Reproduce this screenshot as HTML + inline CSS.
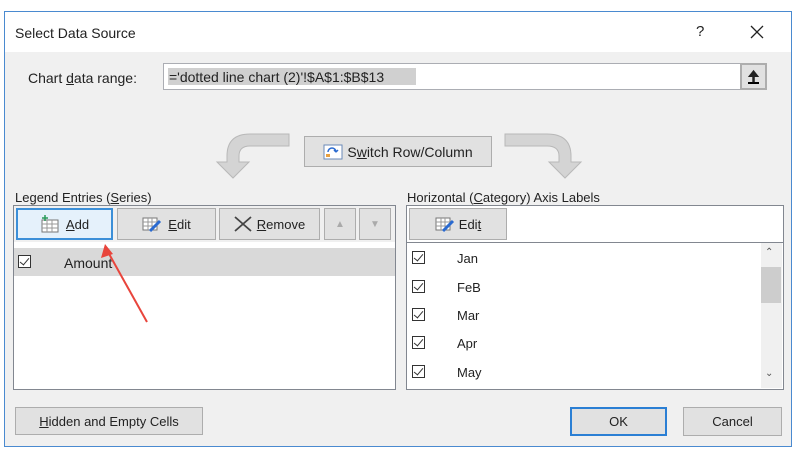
<!DOCTYPE html>
<html><head><style>
*{box-sizing:border-box;margin:0;padding:0}
body{width:799px;height:467px;background:#fff;position:relative;font-family:"Liberation Sans",sans-serif;font-size:13px;color:#222;overflow:hidden}
.a{position:absolute}
.dlg{left:4px;top:11px;width:788px;height:436px;border:1px solid #4a8ad0;background:#f0f0f0}
.btn{position:absolute;background:#e1e1e1;border:1px solid #adadad;display:flex;align-items:center;justify-content:center;font-size:13px;color:#222}
u{text-decoration:underline}
.cb{position:absolute;width:13px;height:13px;border:1px solid #333;background:#fff}
.cb:after{content:"";position:absolute;left:3px;top:0px;width:4px;height:8px;border:solid #333;border-width:0 1.5px 1.5px 0;transform:rotate(40deg)}
</style></head><body>
<div class="a dlg"></div>
<div class="a" style="left:5px;top:12px;width:786px;height:40px;background:#fff"></div>
<div class="a" style="left:15px;top:25px;font-size:14px">Select Data Source</div>
<div class="a" style="left:696px;top:23px;font-size:15px">?</div>
<svg class="a" style="left:750px;top:25px" width="14" height="14"><path d="M1 1L13 13M13 1L1 13" stroke="#222" stroke-width="1.3"/></svg>
<div class="a" style="left:28px;top:70px;font-size:14px">Chart <u>d</u>ata range:</div>
<div class="a" style="left:163px;top:63px;width:578px;height:27px;background:#fff;border:1px solid #abadb3"></div>
<div class="a" style="left:168px;top:68px;height:17px;width:248px;background:#d0d0d0"></div>
<div class="a" style="left:169px;top:69px;font-size:14px">='dotted line chart (2)'!$A$1:$B$13</div>
<div class="a" style="left:740px;top:63px;width:27px;height:27px;background:#e1e1e1;border:2px solid #adadad;text-align:center;font-weight:bold;font-size:14px;line-height:22px"><span style="border-bottom:2px solid #000;line-height:12px;display:inline-block">&#129033;</span></div>
<svg class="a" style="left:205px;top:130px" width="400" height="52">
<path d="M84 4H45Q22 4 22 26V32H12L28 48L44 32H34V26Q34 16 45 16H84Z" fill="#d4d4d4" stroke="#b8b8b8"/>
<path d="M300 4H342Q366 4 366 26V32H376L360 48L344 32H354V26Q354 16 342 16H300Z" fill="#d4d4d4" stroke="#b8b8b8"/>
</svg>
<div class="btn" style="left:304px;top:136px;width:188px;height:31px;font-size:14px"><svg width="20" height="16" style="margin-right:4px"><rect x="1" y="1" width="18" height="14" fill="#fff" stroke="#6b8ab8"/><path d="M5 8a4 4 0 0 1 8 0M13 8l2-2M13 8l-2-2" stroke="#2a6ad0" fill="none" stroke-width="1.5"/><rect x="3" y="10" width="4" height="3" fill="#e8a040"/></svg>S<u>w</u>itch Row/Column</div>
<div class="a" style="left:15px;top:190px;font-size:13px">Legend Entries (<u>S</u>eries)</div>
<div class="a" style="left:407px;top:190px;font-size:13px">Horizontal (<u>C</u>ategory) Axis Labels</div>
<div class="a" style="left:13px;top:205px;width:383px;height:185px;background:#fff;border:1px solid #828790"></div>
<div class="a" style="left:14px;top:206px;width:381px;height:36px;background:#f0f0f0"></div>
<div class="btn" style="left:16px;top:208px;width:97px;height:32px;background:#e5f1fb;border:2px solid #3c8fd8"><svg width="20" height="18" style="margin-right:6px"><rect x="2" y="5" width="16" height="12" fill="#fff" stroke="#777"/><path d="M2 9H18M2 13H18M7 5V17M12 5V17" stroke="#999"/><path d="M5 0V6M2 3H8" stroke="#2a9a5a" stroke-width="1.5"/></svg><u>A</u>dd</div>
<div class="btn" style="left:117px;top:208px;width:99px;height:32px"><svg width="20" height="18" style="margin-right:6px"><rect x="1" y="3" width="14" height="12" fill="#fff" stroke="#777"/><path d="M1 7H15M1 11H15M6 3V15M10 3V15" stroke="#999"/><path d="M8 16L18 6" stroke="#2a6ad0" stroke-width="3"/></svg><u>E</u>dit</div>
<div class="btn" style="left:219px;top:208px;width:101px;height:32px"><svg width="18" height="16" style="margin-right:5px"><path d="M1 1L17 15M17 1L1 15" stroke="#444" stroke-width="1.8"/></svg><u>R</u>emove</div>
<div class="btn" style="left:324px;top:208px;width:32px;height:32px;color:#aaa;font-size:10px">&#9650;</div>
<div class="btn" style="left:359px;top:208px;width:32px;height:32px;color:#aaa;font-size:10px">&#9660;</div>
<div class="a" style="left:14px;top:248px;width:381px;height:28px;background:#d9d9d9"></div>
<div class="cb" style="left:18px;top:255px"></div>
<div class="a" style="left:64px;top:255px;font-size:14px">Amount</div>
<svg class="a" style="left:95px;top:240px" width="60" height="90"><path d="M52 82L13 12" stroke="#e8453c" stroke-width="2"/><path d="M10 4L6 18L18 14Z" fill="#e8453c"/></svg>
<div class="a" style="left:406px;top:205px;width:378px;height:185px;background:#fff;border:1px solid #828790"></div>
<div class="a" style="left:407px;top:206px;width:376px;height:36px;background:#fff"></div>
<div class="btn" style="left:409px;top:208px;width:98px;height:32px"><svg width="20" height="18" style="margin-right:4px"><rect x="1" y="3" width="14" height="12" fill="#fff" stroke="#777"/><path d="M1 7H15M1 11H15M6 3V15M10 3V15" stroke="#999"/><path d="M8 16L18 6" stroke="#2a6ad0" stroke-width="3"/></svg>Edi<u>t</u></div>
<div class="a" style="left:407px;top:242px;width:376px;height:1px;background:#828790"></div>
<div class="cb" style="left:412px;top:251px"></div><div class="a" style="left:457px;top:251px;font-size:13px">Jan</div>
<div class="cb" style="left:412px;top:280px"></div><div class="a" style="left:457px;top:280px;font-size:13px">FeB</div>
<div class="cb" style="left:412px;top:308px"></div><div class="a" style="left:457px;top:308px;font-size:13px">Mar</div>
<div class="cb" style="left:412px;top:336px"></div><div class="a" style="left:457px;top:336px;font-size:13px">Apr</div>
<div class="cb" style="left:412px;top:365px"></div><div class="a" style="left:457px;top:365px;font-size:13px">May</div>
<div class="a" style="left:761px;top:243px;width:21px;height:145px;background:#f0f0f0"></div>
<div class="a" style="left:761px;top:267px;width:20px;height:36px;background:#cdcdcd"></div>
<div class="a" style="left:765px;top:247px;font-size:10px;color:#555">&#8963;</div>
<div class="a" style="left:765px;top:368px;font-size:10px;color:#555">&#8964;</div>
<div class="btn" style="left:15px;top:407px;width:188px;height:28px;font-size:13px"><u>H</u>idden and Empty Cells</div>
<div class="btn" style="left:570px;top:407px;width:97px;height:29px;border:2px solid #2b7fd4">OK</div>
<div class="btn" style="left:683px;top:407px;width:99px;height:29px">Cancel</div>
</body></html>
